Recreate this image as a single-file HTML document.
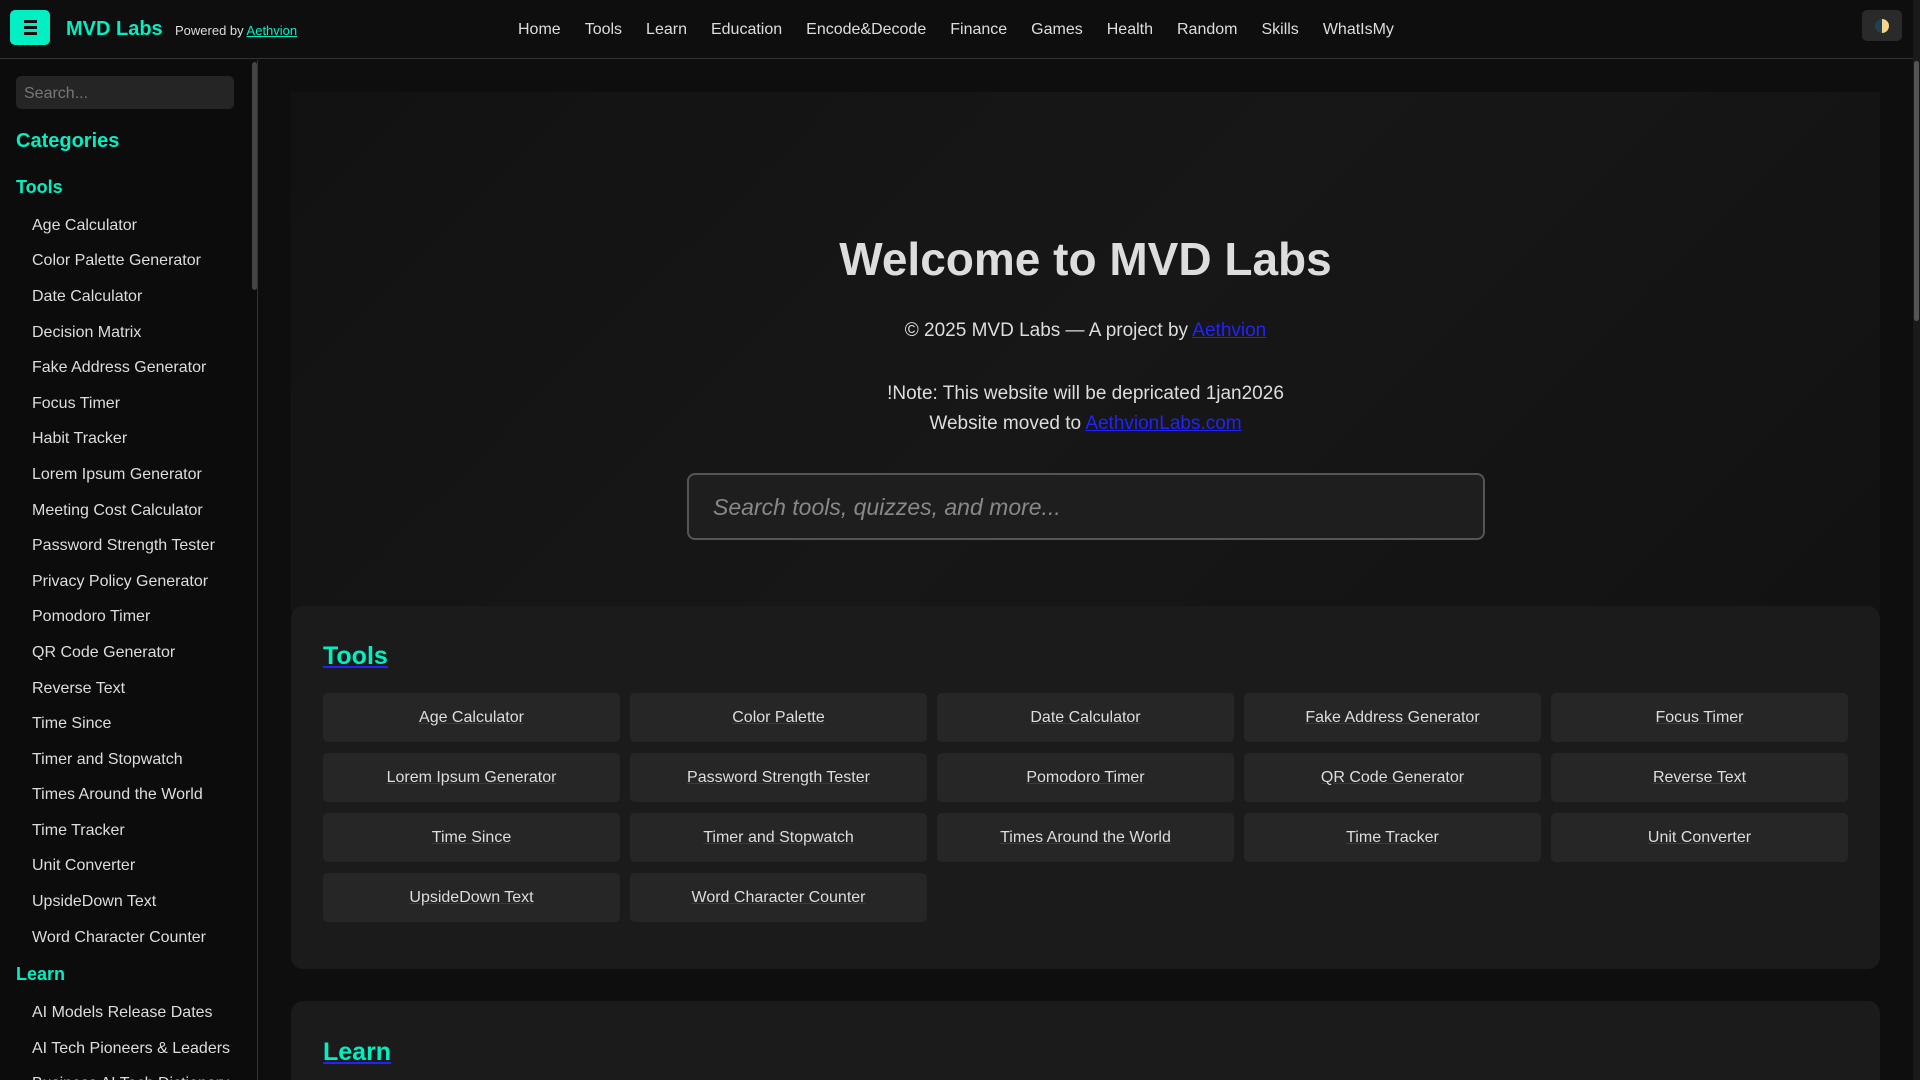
<!DOCTYPE html>
<html><head><meta charset="utf-8"><style>
*{margin:0;padding:0;box-sizing:border-box}
html,body{width:1920px;height:1080px;overflow:hidden;background:#0e0e0e;font-family:"Liberation Sans",sans-serif;color:#ddd}
.hdr{position:absolute;left:0;top:0;width:1913px;height:59px;background:#0e0e0e;border-bottom:1px solid #333}
.ham{position:absolute;left:10px;top:10px;width:40px;height:35px;background:#00f0c4;border-radius:5px}
.ham i{position:absolute;left:14px;width:13px;height:3px;background:#111}
.brand{position:absolute;left:66px;top:18px;font-size:20px;font-weight:bold;color:#00f0c4}
.pw{position:absolute;left:175px;top:23px;font-size:13px;color:#ddd}
.pw a{color:#00f0c4;text-decoration:underline}
.nav{position:absolute;left:518px;top:21px;font-size:16px;color:#ddd;white-space:nowrap}
.nav span{margin-right:24px}
.tog{position:absolute;left:1862px;top:10px;width:40px;height:31px;background:#2a2a2a;border-radius:5px}
.tog i{position:absolute;left:13px;top:9px;width:14px;height:14px;border-radius:50%;background:linear-gradient(90deg,#1f4055 50%,#f5d58a 50%)}
.sb{position:absolute;left:1913px;top:0;width:7px;height:1080px;background:#1a1a1a}
.sb i{position:absolute;left:1px;top:61px;width:5px;height:260px;background:#555;border-radius:3px}
.side{position:absolute;left:0;top:60px;width:258px;height:1020px;background:#0c0c0c;border-right:1px solid #333;overflow:hidden}
.side .ss{position:absolute;left:252px;top:2px;width:5px;height:228px;background:#444;border-radius:3px}
.srch{position:absolute;left:16px;top:16px;width:218px;height:33px;background:#252525;border-radius:5px;font-size:16px;color:#777;padding:9px 8px}
.side h2{position:absolute;left:16px;font-size:20px;font-weight:bold;color:#00f0c4}
.side h3{position:absolute;left:16px;font-size:18px;font-weight:bold;color:#00f0c4}
.it{position:absolute;left:32px;font-size:16px;color:#ddd;margin-top:2px}
.main{position:absolute;left:259px;top:60px;width:1654px;height:1020px;background:#0e0e0e;overflow:hidden}
.hero{position:absolute;left:32px;top:32px;width:1589px;height:520px;background:linear-gradient(135deg,#121212,#171717 50%,#121212)}
.hero h1{position:absolute;top:140px;width:100%;text-align:center;font-size:46px;font-weight:bold;color:#ddd}
.hero p{position:absolute;width:100%;text-align:center;font-size:19px;color:#ddd}
.hero a{color:#2222ff;text-decoration:underline}
.big{position:absolute;left:396px;top:381px;width:798px;height:67px;border:2px solid #555;border-radius:8px;background:#1e1e1e;font-size:23px;font-style:italic;color:#888;padding:19px 24px}
.card{position:absolute;left:32px;width:1589px;background:#1b1b1b;border-radius:12px}
.card h2{position:absolute;left:32px;font-size:25px;font-weight:bold;color:#00f0c4;text-decoration:underline;text-decoration-color:#2222ff}
.g{position:absolute;left:32px;top:87px;display:grid;grid-template-columns:repeat(5,297px);gap:11px 10px}
.g div{height:49px;background:#262626;border-radius:5px;text-align:center;line-height:49px;font-size:16px;color:#ddd;text-decoration:underline;text-decoration-color:#2222ff}
</style></head><body>
<div class="hdr">
<div class="ham"><i style="top:10px"></i><i style="top:16px"></i><i style="top:22px"></i></div>
<div class="brand">MVD Labs</div>
<div class="pw">Powered by <a>Aethvion</a></div>
<div class="nav"><span>Home</span><span>Tools</span><span>Learn</span><span>Education</span><span>Encode&amp;Decode</span><span>Finance</span><span>Games</span><span>Health</span><span>Random</span><span>Skills</span><span>WhatIsMy</span></div>
<div class="tog"><i></i></div>
</div>
<div class="sb"><i></i></div>
<div class="side"><div class="ss"></div>
<div class="srch">Search...</div>
<h2 style="top:70px">Categories</h2>
<h3 style="top:117px">Tools</h3>
<div class="it" style="top:155px">Age Calculator</div>
<div class="it" style="top:190px">Color Palette Generator</div>
<div class="it" style="top:226px">Date Calculator</div>
<div class="it" style="top:262px">Decision Matrix</div>
<div class="it" style="top:297px">Fake Address Generator</div>
<div class="it" style="top:333px">Focus Timer</div>
<div class="it" style="top:368px">Habit Tracker</div>
<div class="it" style="top:404px">Lorem Ipsum Generator</div>
<div class="it" style="top:440px">Meeting Cost Calculator</div>
<div class="it" style="top:475px">Password Strength Tester</div>
<div class="it" style="top:511px">Privacy Policy Generator</div>
<div class="it" style="top:546px">Pomodoro Timer</div>
<div class="it" style="top:582px">QR Code Generator</div>
<div class="it" style="top:618px">Reverse Text</div>
<div class="it" style="top:653px">Time Since</div>
<div class="it" style="top:689px">Timer and Stopwatch</div>
<div class="it" style="top:724px">Times Around the World</div>
<div class="it" style="top:760px">Time Tracker</div>
<div class="it" style="top:795px">Unit Converter</div>
<div class="it" style="top:831px">UpsideDown Text</div>
<div class="it" style="top:867px">Word Character Counter</div>
<h3 style="top:904px">Learn</h3>
<div class="it" style="top:942px">AI Models Release Dates</div>
<div class="it" style="top:978px">AI Tech Pioneers &amp; Leaders</div>
<div class="it" style="top:1013px">Business AI Tech Dictionary</div>
</div>
<div class="main">
<div class="hero">
<h1>Welcome to MVD Labs</h1>
<p style="top:228px">© 2025 MVD Labs — A project by <a>Aethvion</a></p>
<p style="top:291px">!Note: This website will be depricated 1jan2026</p>
<p style="top:321px">Website moved to <a>AethvionLabs.com</a></p>
<div class="big">Search tools, quizzes, and more...</div>
</div>
<div class="card" style="top:546px;height:363px">
<h2 style="top:36px">Tools</h2>
<div class="g">
<div>Age Calculator</div><div>Color Palette</div><div>Date Calculator</div><div>Fake Address Generator</div><div>Focus Timer</div>
<div>Lorem Ipsum Generator</div><div>Password Strength Tester</div><div>Pomodoro Timer</div><div>QR Code Generator</div><div>Reverse Text</div>
<div>Time Since</div><div>Timer and Stopwatch</div><div>Times Around the World</div><div>Time Tracker</div><div>Unit Converter</div>
<div>UpsideDown Text</div><div>Word Character Counter</div>
</div></div>
<div class="card" style="top:941px;height:100px">
<h2 style="top:37px">Learn</h2>
</div>
</div>
</body></html>
